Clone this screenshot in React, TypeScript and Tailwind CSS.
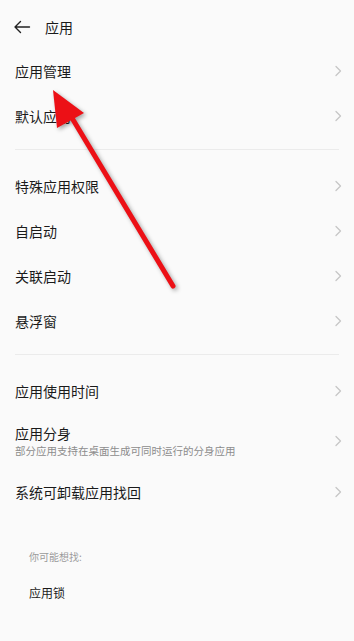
type Item = { title: string; sub?: string }

const groups: Item[][] = [
  [{ title: '应用管理' }, { title: '默认应用' }],
  [{ title: '特殊应用权限' }, { title: '自启动' }, { title: '关联启动' }, { title: '悬浮窗' }],
  [
    { title: '应用使用时间' },
    { title: '应用分身', sub: '部分应用支持在桌面生成可同时运行的分身应用' },
    { title: '系统可卸载应用找回' },
  ],
]

function Chevron() {
  return (
    <svg width="8" height="12" viewBox="0 0 8 12" fill="none" className="shrink-0">
      <path d="M2 1.5 L6.5 6 L2 10.5" stroke="#c6c6c6" strokeWidth="1.3" strokeLinecap="round" strokeLinejoin="round" />
    </svg>
  )
}

function Row({ item }: { item: Item }) {
  return (
    <div className={`flex items-center justify-between pl-[15px] pr-[12px] ${item.sub ? 'h-[56px]' : 'h-[45px]'}`}>
      <div className="flex flex-col">
        <span className="text-[14px] leading-[18px] text-[#1a1a1a]">{item.title}</span>
        {item.sub && <span className="mt-[2px] text-[10.5px] leading-[14px] text-[#8c8c8c]">{item.sub}</span>}
      </div>
      <Chevron />
    </div>
  )
}

export default function App() {
  return (
    <div
      className="relative w-[354px] h-[641px] overflow-hidden bg-[#fafafa]"
      style={{ fontFamily: '"Noto Sans CJK SC", "Noto Sans", sans-serif' }}
    >
      {/* header */}
      <div className="flex items-center h-[48px] pt-[6px] pl-[13px]">
        <svg width="18" height="14" viewBox="0 0 18 14" fill="none">
          <path d="M16.5 7 H2 M7.5 1.5 L2 7 L7.5 12.5" stroke="#222" strokeWidth="1.4" strokeLinecap="round" strokeLinejoin="round" />
        </svg>
        <span className="ml-[14px] text-[14px] text-[#1a1a1a]">应用</span>
      </div>

      {groups.map((g, i) => (
        <div key={i}>
          {i > 0 && (
            <div className="pt-[11px] pb-[13px] px-[15px]">
              <div className="h-px bg-[#ebebeb]" />
            </div>
          )}
          {g.map((it) => (
            <Row key={it.title} item={it} />
          ))}
        </div>
      ))}

      {/* suggestions */}
      <div className="pl-[29px] pt-[36px]">
        <div className="text-[10px] leading-[14px] text-[#9a9a9a]">你可能想找:</div>
        <div className="mt-[21px] text-[12px] leading-[16px] text-[#1a1a1a]">应用锁</div>
      </div>

      {/* red annotation arrow */}
      <svg
        className="absolute inset-0 pointer-events-none drop-shadow-[2px_2px_2px_rgba(0,0,0,0.35)]"
        width="354"
        height="641"
        viewBox="0 0 354 641"
      >
        <line x1="173" y1="286" x2="72" y2="118" stroke="#ec1016" strokeWidth="5" strokeLinecap="round" />
        <polygon points="53,90 57,128 84,113" fill="#ec1016" />
      </svg>
    </div>
  )
}
